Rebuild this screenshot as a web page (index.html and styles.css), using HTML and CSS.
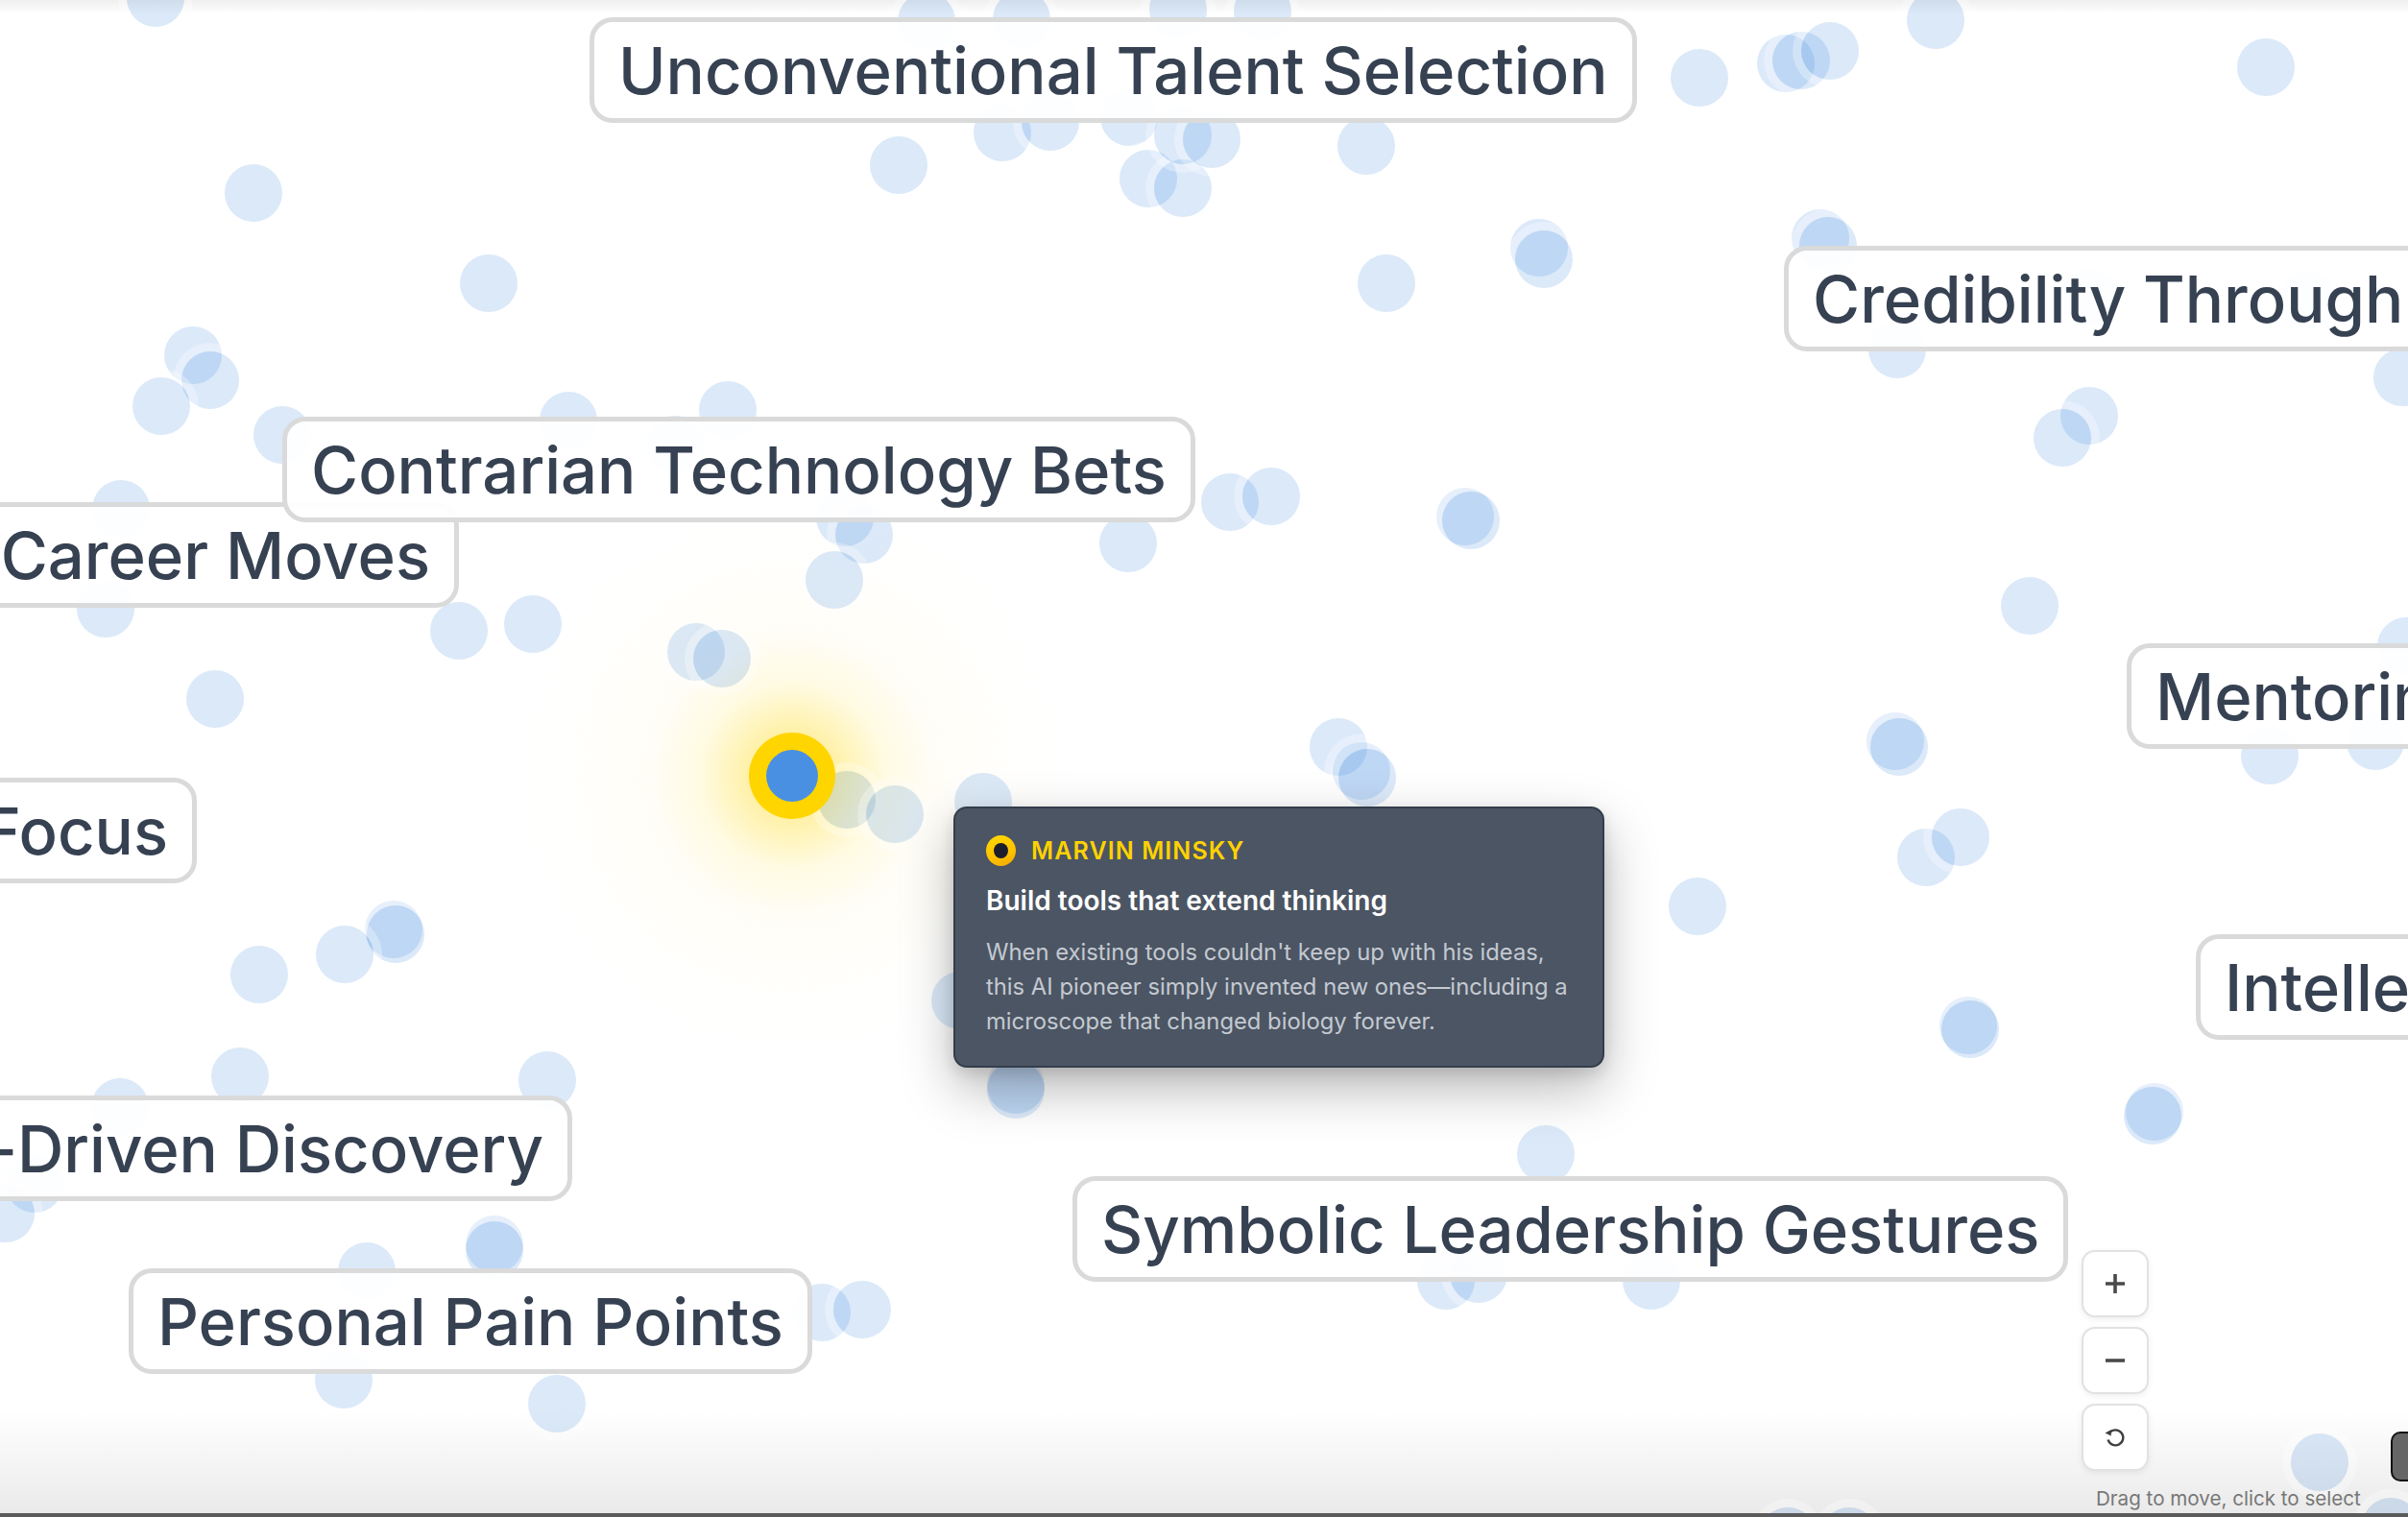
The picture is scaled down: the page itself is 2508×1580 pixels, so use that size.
FILE: index.html
```html
<!DOCTYPE html>
<html lang="en">
<head>
<meta charset="utf-8">
<title>Pattern Map</title>
<link rel="stylesheet" href="styles.css">
</head>
<body>
<div class="canvas">
  <div class="top-fade"></div>
  <div class="bottom-fade"></div>
  <div class="glow"></div>

  <div class="dots">
    <div class="dot" style="left:132px;top:-32px"></div>
    <div class="dot" style="left:234px;top:171px"></div>
    <div class="dot" style="left:479px;top:265px"></div>
    <div class="dot" style="left:171px;top:340px"></div>
    <div class="dot" style="left:189px;top:366px"></div>
    <div class="dot" style="left:138px;top:393px"></div>
    <div class="dot" style="left:264px;top:423px"></div>
    <div class="dot" style="left:562px;top:408px"></div>
    <div class="dot" style="left:728px;top:397px"></div>
    <div class="dot" style="left:673px;top:433px"></div>
    <div class="dot" style="left:850px;top:509px"></div>
    <div class="dot" style="left:870px;top:527px"></div>
    <div class="dot" style="left:839px;top:574px"></div>
    <div class="dot" style="left:1145px;top:536px"></div>
    <div class="dot" style="left:1251px;top:493px"></div>
    <div class="dot" style="left:1294px;top:487px"></div>
    <div class="dot" style="left:448px;top:627px"></div>
    <div class="dot" style="left:525px;top:620px"></div>
    <div class="dot" style="left:80px;top:604px"></div>
    <div class="dot" style="left:96px;top:500px"></div>
    <div class="dot" style="left:194px;top:698px"></div>
    <div class="dot" style="left:695px;top:649px"></div>
    <div class="dot" style="left:722px;top:656px"></div>
    <div class="dot" style="left:906px;top:142px"></div>
    <div class="dot" style="left:1014px;top:108px"></div>
    <div class="dot" style="left:1064px;top:97px"></div>
    <div class="dot" style="left:1146px;top:92px"></div>
    <div class="dot" style="left:1166px;top:156px"></div>
    <div class="dot" style="left:1202px;top:166px"></div>
    <div class="dot" style="left:1202px;top:111px"></div>
    <div class="dot" style="left:1232px;top:115px"></div>
    <div class="dot" style="left:1393px;top:122px"></div>
    <div class="dot" style="left:935px;top:-8px"></div>
    <div class="dot" style="left:1034px;top:-10px"></div>
    <div class="dot" style="left:1197px;top:-20px"></div>
    <div class="dot" style="left:1285px;top:-18px"></div>
    <div class="dot" style="left:1740px;top:51px"></div>
    <div class="dot" style="left:1830px;top:36px"></div>
    <div class="dot" style="left:1846px;top:33px"></div>
    <div class="dot" style="left:1876px;top:23px"></div>
    <div class="dot" style="left:1986px;top:-9px"></div>
    <div class="dot" style="left:2330px;top:40px"></div>
    <div class="dot" style="left:1414px;top:265px"></div>
    <div class="dot" style="left:1573px;top:228px"></div>
    <div class="dot" style="left:1578px;top:240px"></div>
    <div class="dot" style="left:1866px;top:218px"></div>
    <div class="dot" style="left:1874px;top:226px"></div>
    <div class="dot" style="left:1946px;top:334px"></div>
    <div class="dot" style="left:2146px;top:403px"></div>
    <div class="dot" style="left:2118px;top:426px"></div>
    <div class="dot" style="left:2472px;top:363px"></div>
    <div class="dot" style="left:2147px;top:280px"></div>
    <div class="dot" style="left:2374px;top:283px"></div>
    <div class="dot" style="left:1496px;top:508px"></div>
    <div class="dot" style="left:1502px;top:512px"></div>
    <div class="dot" style="left:2084px;top:601px"></div>
    <div class="dot" style="left:1364px;top:748px"></div>
    <div class="dot" style="left:1388px;top:773px"></div>
    <div class="dot" style="left:1394px;top:780px"></div>
    <div class="dot" style="left:1944px;top:742px"></div>
    <div class="dot" style="left:1948px;top:748px"></div>
    <div class="dot" style="left:2334px;top:757px"></div>
    <div class="dot" style="left:2444px;top:742px"></div>
    <div class="dot" style="left:2476px;top:643px"></div>
    <div class="dot" style="left:852px;top:803px"></div>
    <div class="dot" style="left:902px;top:818px"></div>
    <div class="dot" style="left:994px;top:805px"></div>
    <div class="dot" style="left:970px;top:1012px"></div>
    <div class="dot" style="left:1028px;top:1100px"></div>
    <div class="dot" style="left:1028px;top:1105px"></div>
    <div class="dot" style="left:380px;top:938px"></div>
    <div class="dot" style="left:382px;top:943px"></div>
    <div class="dot" style="left:329px;top:964px"></div>
    <div class="dot" style="left:240px;top:985px"></div>
    <div class="dot" style="left:220px;top:1091px"></div>
    <div class="dot" style="left:95px;top:1123px"></div>
    <div class="dot" style="left:540px;top:1095px"></div>
    <div class="dot" style="left:6px;top:1203px"></div>
    <div class="dot" style="left:-24px;top:1234px"></div>
    <div class="dot" style="left:485px;top:1266px"></div>
    <div class="dot" style="left:485px;top:1272px"></div>
    <div class="dot" style="left:352px;top:1294px"></div>
    <div class="dot" style="left:826px;top:1337px"></div>
    <div class="dot" style="left:868px;top:1334px"></div>
    <div class="dot" style="left:328px;top:1407px"></div>
    <div class="dot" style="left:550px;top:1432px"></div>
    <div class="dot" style="left:1738px;top:914px"></div>
    <div class="dot" style="left:1976px;top:863px"></div>
    <div class="dot" style="left:2012px;top:842px"></div>
    <div class="dot" style="left:2020px;top:1038px"></div>
    <div class="dot" style="left:2022px;top:1042px"></div>
    <div class="dot" style="left:2214px;top:1128px"></div>
    <div class="dot" style="left:2212px;top:1132px"></div>
    <div class="dot" style="left:1580px;top:1172px"></div>
    <div class="dot" style="left:1476px;top:1304px"></div>
    <div class="dot" style="left:1510px;top:1297px"></div>
    <div class="dot" style="left:1690px;top:1304px"></div>
    <div class="dot" style="left:2386px;top:1493px"></div>
    <div class="dot" style="left:1832px;top:1570px"></div>
    <div class="dot" style="left:1896px;top:1570px"></div>
    <div class="dot" style="left:2460px;top:1560px"></div>
  </div>

  <div class="node">
    <div class="node-core"></div>
  </div>

  <div class="label l-career">Career Moves</div>
  <div class="label l-unconv">Unconventional Talent Selection</div>
  <div class="label l-cred">Credibility Through Results</div>
  <div class="label l-contra">Contrarian Technology Bets</div>
  <div class="label l-mentor">Mentoring</div>
  <div class="label l-focus">Deep Focus</div>
  <div class="label l-intel">Intellectual</div>
  <div class="label l-driven">Curiosity-Driven Discovery</div>
  <div class="label l-symbol">Symbolic Leadership Gestures</div>
  <div class="label l-pain">Personal Pain Points</div>

  <div class="tooltip">
    <div class="tt-head">
      <span class="tt-icon"><span class="tt-icon-core"></span></span>
      <span class="tt-name">Marvin Minsky</span>
    </div>
    <div class="tt-title">Build tools that extend thinking</div>
    <div class="tt-desc">When existing tools couldn't keep up with his ideas, this AI pioneer simply invented new ones—including a microscope that changed biology forever.</div>
  </div>

  <div class="controls">
    <div class="ctrl">
      <svg width="24" height="24" viewBox="0 0 24 24"><path d="M12 2v20M2 12h20" stroke="#4a4a4a" stroke-width="3.6" stroke-linecap="butt" fill="none"/></svg>
    </div>
    <div class="ctrl">
      <svg width="24" height="24" viewBox="0 0 24 24"><path d="M2 12h20" stroke="#4a4a4a" stroke-width="3.6" fill="none"/></svg>
    </div>
    <div class="ctrl">
      <svg width="24" height="24" viewBox="0 0 24 24"><path d="M6.2 7.2A8 8 0 1 1 4.6 14.5" stroke="#3f3f3f" stroke-width="2.4" fill="none"/><path d="M1.5 7.5L7.6 4.2L7.9 10.4Z" fill="#3f3f3f"/></svg>
    </div>
  </div>
  <div class="hint">Drag to move, click to select</div>
  <div class="side-tab"></div>
  <div class="bottom-line"></div>
</div>
</body>
</html>
```

FILE: styles.css
```css
html, body {
  margin: 0;
  padding: 0;
  background: #ffffff;
}

.canvas {
  position: relative;
  width: 2508px;
  height: 1580px;
  overflow: hidden;
  background: #ffffff;
  font-family: Inter, "Noto Sans", "Liberation Sans", sans-serif;
}

.top-fade {
  position: absolute;
  left: 0;
  top: 0;
  width: 100%;
  height: 14px;
  background: linear-gradient(to bottom, #efefef, rgba(255,255,255,0));
}

.bottom-fade {
  position: absolute;
  left: 0;
  bottom: 0;
  width: 100%;
  height: 110px;
  background: linear-gradient(to bottom, rgba(236,236,236,0), #e9e9e9);
}

.bottom-line {
  position: absolute;
  left: 0;
  bottom: 0;
  width: 100%;
  height: 4px;
  background: #5b5b5b;
}

.glow {
  position: absolute;
  left: 525px;
  top: 508px;
  width: 600px;
  height: 600px;
  border-radius: 50%;
  background: radial-gradient(circle,
    rgba(255, 214, 0, 0.55) 0px,
    rgba(255, 214, 0, 0.32) 50px,
    rgba(255, 220, 40, 0.14) 95px,
    rgba(255, 228, 100, 0.06) 145px,
    rgba(255, 236, 150, 0.035) 210px,
    rgba(255, 245, 200, 0.015) 260px,
    rgba(255, 255, 255, 0) 300px);
}

.dots {
  position: absolute;
  inset: 0;
}

.dot {
  position: absolute;
  width: 60px;
  height: 60px;
  border-radius: 50%;
  background: rgba(74, 144, 226, 0.2);
  box-shadow: 0 0 0 9px rgba(255, 255, 255, 0.3);
}

.node {
  position: absolute;
  left: 780px;
  top: 763px;
  width: 90px;
  height: 90px;
  border-radius: 50%;
  background: #ffd500;
  display: flex;
  align-items: center;
  justify-content: center;
}

.node-core {
  width: 54px;
  height: 54px;
  border-radius: 50%;
  background: #4a90e2;
}

.label {
  position: absolute;
  height: 110px;
  box-sizing: border-box;
  padding: 0 25px;
  border: 5px solid #dadada;
  border-radius: 24px;
  background: rgba(255, 255, 255, 0.94);
  display: flex;
  align-items: center;
  font-family: Inter, "Noto Sans", "Liberation Sans", sans-serif;
  font-weight: 500;
  font-size: 67px;
  color: #364152;
  white-space: nowrap;
}

.l-unconv { left: 614px; top: 18px; }
.l-cred   { left: 1858px; top: 256px; }
.l-contra { left: 294px; top: 434px; }
.l-career { right: 2030px; top: 523px; }
.l-mentor { left: 2215px; top: 670px; }
.l-focus  { right: 2303px; top: 810px; }
.l-intel  { left: 2287px; top: 973px; }
.l-driven { right: 1912px; top: 1141px; }
.l-symbol { left: 1117px; top: 1225px; }
.l-pain   { left: 134px; top: 1321px; }

.tooltip {
  position: absolute;
  left: 993px;
  top: 840px;
  width: 678px;
  box-sizing: border-box;
  padding: 28px 32px;
  background: #4b5563;
  border: 2px solid #343d4b;
  border-radius: 14px;
  box-shadow: 0 22px 55px rgba(0, 0, 0, 0.28), 0 6px 16px rgba(0, 0, 0, 0.12);
}

.tt-head {
  display: flex;
  align-items: center;
  gap: 16px;
  height: 32px;
}

.tt-icon {
  width: 31px;
  height: 32px;
  border-radius: 50%;
  background: linear-gradient(160deg, #ffd800 0%, #ffc400 55%, #f2a900 100%);
  display: flex;
  align-items: center;
  justify-content: center;
  flex: none;
}

.tt-icon-core {
  width: 15px;
  height: 16px;
  border-radius: 50%;
  background: #1c1f2b;
}

.tt-name {
  font-size: 25px;
  font-weight: 600;
  letter-spacing: 1.1px;
  text-transform: uppercase;
  color: #ffd200;
  line-height: 32px;
}

.tt-title {
  margin-top: 18px;
  font-size: 28px;
  font-weight: 600;
  line-height: 36px;
  color: #ffffff;
}

.tt-desc {
  margin-top: 18px;
  font-size: 23.8px;
  line-height: 36px;
  color: #c4c9d1;
}

.controls {
  position: absolute;
  left: 2168px;
  top: 1302px;
  display: flex;
  flex-direction: column;
  gap: 10px;
}

.ctrl {
  width: 70px;
  height: 70px;
  box-sizing: border-box;
  border: 2px solid #e2e2e2;
  border-radius: 14px;
  background: #ffffff;
  display: flex;
  align-items: center;
  justify-content: center;
  box-shadow: 0 2px 6px rgba(0, 0, 0, 0.07);
}

.hint {
  position: absolute;
  left: 2183px;
  top: 1547px;
  font-size: 20.6px;
  line-height: 28px;
  color: #777777;
  white-space: nowrap;
}

.side-tab {
  position: absolute;
  left: 2490px;
  top: 1491px;
  width: 44px;
  height: 52px;
  box-sizing: border-box;
  background: #666666;
  border: 2px solid #111111;
  border-radius: 10px;
}
```
